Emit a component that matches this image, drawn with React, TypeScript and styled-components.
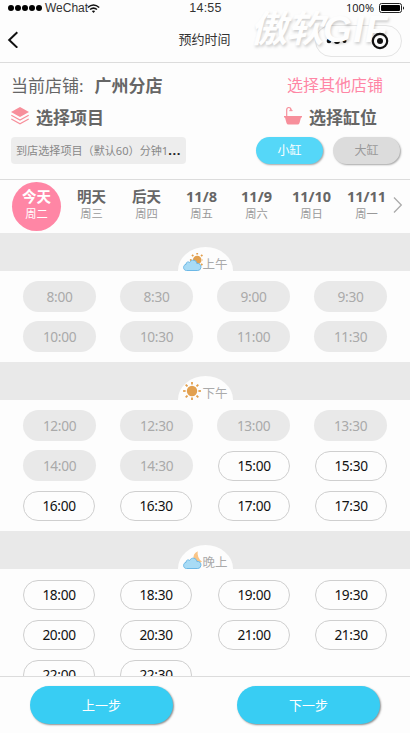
import React from 'react';
import styled, { createGlobalStyle, css } from 'styled-components';

const GlobalStyle = createGlobalStyle`
  * { box-sizing: border-box; }
  body { margin: 0; background: #fdfdfd; }
`;

const Page = styled.div`
  width: 410px;
  height: 733px;
  display: flex;
  flex-direction: column;
  overflow: hidden;
  background: #fdfdfd;
  color: #666;
  font-family: 'Noto Sans', 'Noto Sans CJK SC', sans-serif;
  white-space: nowrap;
`;

const Header = styled.header`
  position: relative;
  height: 63px;
  flex: none;
  border-bottom: 1px solid #dcdcdc;
`;

const StatusBar = styled.div`
  display: grid;
  grid-template-columns: 1fr auto 1fr;
  height: 16px;
  padding: 0 5px 0 8px;
  align-items: center;
  color: #333;
`;

const Carrier = styled.div`
  display: flex;
  align-items: center;
  font: 12px/16px 'Liberation Sans', sans-serif;
  svg { margin-left: -1px; }
`;

const SignalDots = styled.div`
  display: flex;
  gap: 1px;
  margin-right: 3px;
  i {
    width: 6px;
    height: 6px;
    border-radius: 50%;
    background: #000;
  }
`;

const Clock = styled.div`
  margin-right: 2px;
  font: 12.5px/16px 'Liberation Sans', sans-serif;
  letter-spacing: 0.2px;
`;

const Power = styled.div`
  display: flex;
  justify-content: flex-end;
  align-items: center;
  gap: 5px;
  font: 11px/16px 'Open Sans', sans-serif;
  color: #111;
`;

const NavBar = styled.div`
  display: grid;
  grid-template-columns: 1fr auto 1fr;
  align-items: center;
  height: 46px;
  padding: 0 8px 0 7px;
`;

const Title = styled.h1`
  margin: 0;
  font-size: 13px;
  font-weight: 400;
  line-height: 20px;
  color: #333;
`;

const Capsule = styled.div`
  justify-self: end;
  width: 87px;
  height: 32px;
  margin-top: 3px;
  border: 1px solid #e4e4e4;
  border-radius: 16px;
  display: flex;
  align-items: center;
  justify-content: space-between;
  padding: 0 12px 0 10px;
  svg:last-child { position: relative; z-index: 1; }
`;

const Watermark = styled.div`
  position: absolute;
  left: 250px;
  top: 13px;
  font: italic 700 37px/34px 'Liberation Sans', 'Noto Sans CJK SC', sans-serif;
  letter-spacing: -0.5px;
  color: #fefefe;
  text-shadow: 1px 2px 3px rgba(0, 0, 0, 0.19);
  span { letter-spacing: 1.5px; }
`;

const Booking = styled.section`
  height: 117px;
  flex: none;
  display: flex;
  justify-content: space-between;
  padding: 10px 10px 0 11px;
  border-bottom: 1px solid #dcdcdc;
`;

const BookingColumn = styled.div<{ $side: 'left' | 'right' }>`
  width: ${p => (p.$side === 'left' ? 175 : 144)}px;
  display: flex;
  flex-direction: column;
`;

const Shop = styled.div`
  display: flex;
  gap: 11px;
  height: 25px;
  font-size: 17px;
  line-height: 25px;
`;

const ShopLink = styled.a`
  height: 25px;
  margin-left: 31px;
  font-size: 16px;
  line-height: 24px;
  color: #ff86a5;
`;

const Heading = styled.h2<{ $indent?: number }>`
  display: flex;
  align-items: center;
  gap: 7px;
  margin: 7px 0 7px ${p => p.$indent ?? 0}px;
  height: 25px;
  font-size: 17px;
  font-weight: 700;
  line-height: 25px;
  svg { margin-top: -3px; }
`;

const ProjectSelect = styled.div`
  height: 27px;
  padding-left: 5px;
  border-radius: 4px;
  background: #ededed;
  color: #888;
  font-size: 11.1px;
  line-height: 27px;
  b { color: #222; letter-spacing: 0.6px; font-size: 13px; }
`;

const Tubs = styled.div`
  display: flex;
  gap: 10px;
`;

const Tub = styled.button<{ $active?: boolean }>`
  width: 67px;
  height: 27px;
  padding: 0;
  border: 0;
  border-radius: 14px;
  font: inherit;
  font-size: 12px;
  line-height: 26px;
  background: ${p => (p.$active ? '#55d7f8' : '#dcdcdc')};
  color: ${p => (p.$active ? '#fff' : '#999')};
  box-shadow: 1px 1px 2px rgba(0, 0, 0, 0.35);
`;

const Dates = styled.nav`
  height: 53px;
  flex: none;
  display: flex;
  align-items: flex-start;
  padding: 2px 0 0 9px;
`;

const DateTab = styled.div<{ $active?: boolean }>`
  width: 55px;
  flex: none;
  display: flex;
  justify-content: center;
  div {
    width: 49px;
    height: 49px;
    flex: none;
    display: flex;
    flex-direction: column;
    align-items: center;
    border-radius: 50%;
    padding-top: 5px;
    color: #999;
    font-size: 11.3px;
    line-height: 16px;
    ${p => p.$active && css`background: #ff86a5; color: #fff;`}
  }
  strong {
    font-size: 14.5px;
    line-height: 19px;
    color: ${p => (p.$active ? '#fff' : '#666')};
  }
`;

const NextDates = styled.svg`
  width: 10px;
  height: 18px;
  margin: 14px 0 0 -1px;
`;

const Schedule = styled.main`
  flex: 1;
  min-height: 0;
  overflow: hidden;
`;

const PeriodBand = styled.div`
  height: 38px;
  display: flex;
  align-items: flex-end;
  justify-content: center;
  background: #e9e9e9;
`;

const PeriodLabel = styled.div`
  width: 55px;
  height: 24px;
  display: flex;
  align-items: flex-end;
  padding-left: 5px;
  border-radius: 28px 28px 0 0 / 24px 24px 0 0;
  background: #fdfdfd;
  color: #aaa;
  font-size: 12.5px;
  line-height: 12px;
  svg { flex: none; }
`;

const Slots = styled.div`
  display: grid;
  grid-template-columns: repeat(4, 73px);
  grid-auto-rows: 31px;
  column-gap: 24px;
  row-gap: 9px;
  padding: 10px 0 10px 23px;
`;

const Slot = styled.button<{ $open: boolean }>`
  padding: 0;
  border: 0;
  border-radius: 16px;
  font: inherit;
  font-size: 13.7px;
  letter-spacing: -0.35px;
  line-height: 31px;
  background: #e9e9e9;
  color: #aaa;
  ${p => p.$open && css`
    width: 72px;
    height: 30px;
    margin-top: 1px;
    border: 1px solid #cfcfcf;
    background: #fdfdfd;
    color: #111;
    line-height: 28px;
    &:nth-child(4n), &:nth-child(4n + 3) { margin-left: 1px; }
  `}
`;

const Footer = styled.footer`
  height: 57px;
  flex: none;
  display: flex;
  justify-content: space-between;
  padding: 9px 30px 0;
  border-top: 1px solid #dcdcdc;
  background: #fdfdfd;
`;

const StepButton = styled.button`
  width: 143px;
  height: 38px;
  padding: 0;
  border: 0;
  border-radius: 19px;
  background: #38cdf3;
  color: #fff;
  font: inherit;
  font-size: 13px;
  line-height: 36px;
  box-shadow: 1px 1px 2px rgba(0, 0, 0, 0.45);
`;

const WifiIcon = () => (
  <svg width="13" height="9" viewBox="0 0 13 9" fill="none" stroke="#111" strokeWidth="1.6">
    <path d="M.8 3.5Q6.5-1.5 12.2 3.5M3 5.5Q6.5 2.6 10 5.5" />
    <path d="M4.8 7 6.5 9 8.2 7Q6.5 5.8 4.8 7Z" fill="#111" stroke="none" />
  </svg>
);

const BatteryIcon = () => (
  <svg width="26" height="10" viewBox="0 0 26 10">
    <rect x=".5" y=".5" width="22" height="9" rx="2" fill="none" stroke="#222" />
    <rect x="2" y="2" width="19" height="6" rx="1" fill="#000" />
    <path d="M24 3.2Q26 5 24 6.8Z" fill="#000" />
  </svg>
);

const BackIcon = () => (
  <svg width="12" height="18" viewBox="0 0 12 18" fill="none" stroke="#111" strokeWidth="2">
    <path d="M10.3 2.3 2.2 10l8.1 7.7" />
  </svg>
);

const MoreIcon = () => (
  <svg width="22" height="8" viewBox="0 0 22 8" fill="#111">
    <circle cx="3" cy="4" r="2.3" />
    <circle cx="11" cy="4" r="3" />
    <circle cx="18.5" cy="4" r="2" />
  </svg>
);

const TargetIcon = () => (
  <svg width="18" height="18" viewBox="0 0 18 18">
    <circle cx="9" cy="9" r="7.2" fill="none" stroke="#111" strokeWidth="2.2" />
    <circle cx="9" cy="9" r="3" fill="#111" />
  </svg>
);

const LayersIcon = () => (
  <svg width="18" height="20" viewBox="0 0 18 20" fill="none" stroke="#f78f9b" strokeWidth="1.2">
    <path d="M9 1 18 6 9 11 0 6Z" fill="#f78f9b" stroke="none" />
    <path d="M.3 9.2 9 14l8.7-4.8M.3 12.9 9 17.8l8.7-4.9" />
  </svg>
);

const TubIcon = () => (
  <svg width="18" height="20" viewBox="0 0 18 20">
    <path d="M2.7 10V3.7Q2.7 1.5 4.8 1.5Q7 1.5 7 4M5.6 5.2 7 3.5 8.3 5.2" fill="none" stroke="#f78f9b" strokeWidth="1.2" />
    <path d="M0 10H18V11.5H17L15.5 17Q15 18.5 13.5 18.5H4.5Q3 18.5 2.5 17L1 11.5H0Z" fill="#f78f9b" />
  </svg>
);

const Sun = ({ cx, cy, r, ray }: { cx: number; cy: number; r: number; ray: number }) => (
  <g fill="#e2a04f" stroke="#e2a04f" strokeWidth="1.8">
    <circle cx={cx} cy={cy} r={r} stroke="none" />
    {[0, 45, 90, 135, 180, 225, 270, 315].map(a => (
      <path key={a} d={`M${cx} ${cy - r - 1.2}v${-ray}`} transform={`rotate(${a} ${cx} ${cy})`} />
    ))}
  </g>
);

const Cloud = () => (
  <path
    d="M3.5 17.5C-.3 17.5-.3 11.8 3 11.4 2.8 8.8 5.8 8.4 6.6 9.5 8.5 5.8 13.6 6.8 13.8 10.4 16.4 10 18.4 12 17.9 14.6Q17.4 17.5 14.8 17.5Z"
    fill="#a8dbf5" stroke="#6cb8e6" strokeWidth="1"
  />
);

const PeriodIcon = ({ kind }: { kind: Period['icon'] }) => (
  <svg width="20" height="18" viewBox="0 0 20 18">
    {kind === 'noon' ? (
      <Sun cx={9} cy={9} r={5.2} ray={2.5} />
    ) : kind === 'morning' ? (
      <Sun cx={14.2} cy={7} r={4.3} ray={1.8} />
    ) : (
      <path d="M14.7.3Q9.5 3 10.7 8.2L16 12.5 19 10.6Q13.8 7 14.7.3Z" fill="#f9c486" />
    )}
    {kind !== 'noon' && <Cloud />}
  </svg>
);

type Period = { name: string; icon: 'morning' | 'noon' | 'night'; slots: string[] };

const days = [
  ['今天', '周二'], ['明天', '周三'], ['后天', '周四'], ['11/8', '周五'],
  ['11/9', '周六'], ['11/10', '周日'], ['11/11', '周一'],
];

const periods: Period[] = [
  { name: '上午', icon: 'morning', slots: ['8:00', '8:30', '9:00', '9:30', '10:00', '10:30', '11:00', '11:30'] },
  { name: '下午', icon: 'noon', slots: ['12:00', '12:30', '13:00', '13:30', '14:00', '14:30', '15:00', '15:30', '16:00', '16:30', '17:00', '17:30'] },
  { name: '晚上', icon: 'night', slots: ['18:00', '18:30', '19:00', '19:30', '20:00', '20:30', '21:00', '21:30', '22:00', '22:30'] },
];

export default function App() {
  return (
    <Page>
      <GlobalStyle />
      <Header>
        <StatusBar>
          <Carrier>
            <SignalDots><i /><i /><i /><i /><i /></SignalDots>
            WeChat
            <WifiIcon />
          </Carrier>
          <Clock>14:55</Clock>
          <Power>100%<BatteryIcon /></Power>
        </StatusBar>
        <NavBar>
          <BackIcon />
          <Title>预约时间</Title>
          <Capsule><MoreIcon /><TargetIcon /></Capsule>
        </NavBar>
        <Watermark>傲软<span>GIF</span></Watermark>
      </Header>

      <Booking>
        <BookingColumn $side="left">
          <Shop><span>当前店铺:</span><strong>广州分店</strong></Shop>
          <Heading><LayersIcon />选择项目</Heading>
          <ProjectSelect>到店选择项目（默认60）分钟1<b>...</b></ProjectSelect>
        </BookingColumn>
        <BookingColumn $side="right">
          <ShopLink>选择其他店铺</ShopLink>
          <Heading $indent={28}><TubIcon />选择缸位</Heading>
          <Tubs>
            <Tub $active>小缸</Tub>
            <Tub>大缸</Tub>
          </Tubs>
        </BookingColumn>
      </Booking>

      <Dates>
        {days.map(([day, week], i) => (
          <DateTab key={day} $active={i === 0}>
            <div><strong>{day}</strong>{week}</div>
          </DateTab>
        ))}
        <NextDates viewBox="0 0 10 18" fill="none" stroke="#aaa" strokeWidth="1.3">
          <path d="M1 1.5 8.3 9 1 16.5" />
        </NextDates>
      </Dates>

      <Schedule>
        {periods.map(period => (
          <React.Fragment key={period.name}>
            <PeriodBand>
              <PeriodLabel><PeriodIcon kind={period.icon} />{period.name}</PeriodLabel>
            </PeriodBand>
            <Slots>
              {period.slots.map(time => (
                <Slot key={time} $open={parseInt(time, 10) >= 15}>{time}</Slot>
              ))}
            </Slots>
          </React.Fragment>
        ))}
      </Schedule>

      <Footer>
        <StepButton>上一步</StepButton>
        <StepButton>下一步</StepButton>
      </Footer>
    </Page>
  );
}
